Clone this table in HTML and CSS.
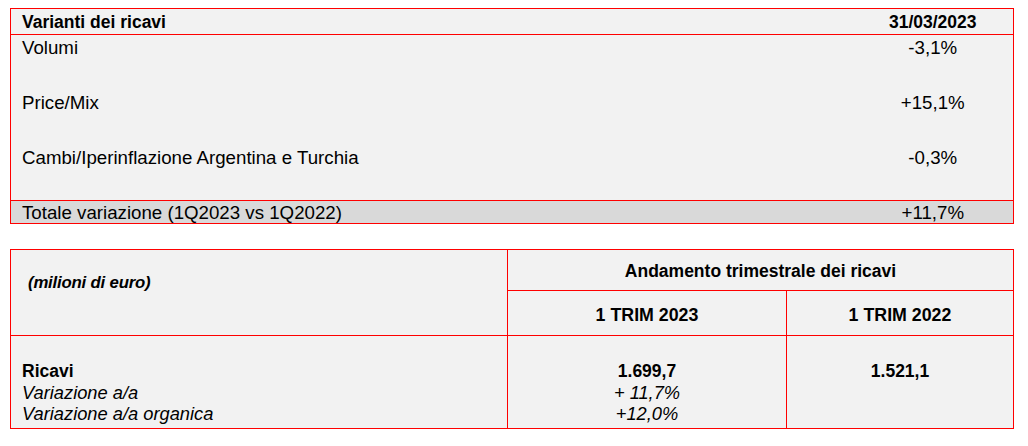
FILE: index.html
```html
<!DOCTYPE html>
<html lang="it">
<head>
<meta charset="utf-8">
<title>Varianti dei ricavi</title>
<link rel="stylesheet" href="styles.css">
</head>
<body>
<main class="page">
  <table class="tbl variants">
    <colgroup><col class="v-label"><col class="v-value"></colgroup>
    <thead>
      <tr class="v-head">
        <th class="lbl">Varianti dei ricavi</th>
        <th class="val">31/03/2023</th>
      </tr>
    </thead>
    <tbody>
      <tr class="v-row"><td class="lbl">Volumi</td><td class="val">-3,1%</td></tr>
      <tr class="v-row"><td class="lbl">Price/Mix</td><td class="val">+15,1%</td></tr>
      <tr class="v-row"><td class="lbl">Cambi/Iperinflazione Argentina e Turchia</td><td class="val">-0,3%</td></tr>
      <tr class="v-total"><td class="lbl">Totale variazione (1Q2023 vs 1Q2022)</td><td class="val">+11,7%</td></tr>
    </tbody>
  </table>

  <table class="tbl quarter">
    <colgroup><col class="q-c1"><col class="q-c2"><col class="q-c3"></colgroup>
    <thead>
      <tr class="q-h1">
        <th rowspan="2" class="unit">(milioni di euro)</th>
        <th colspan="2" class="q-title">Andamento trimestrale dei ricavi</th>
      </tr>
      <tr class="q-h2">
        <th class="q-period">1 TRIM 2023</th>
        <th class="q-period">1 TRIM 2022</th>
      </tr>
    </thead>
    <tbody>
      <tr class="q-body">
        <td class="q-labels">
          <div class="strong">Ricavi</div>
          <div class="em">Variazione a/a</div>
          <div class="em">Variazione a/a organica</div>
        </td>
        <td class="q-num">
          <div class="strong">1.699,7</div>
          <div class="em">+ 11,7%</div>
          <div class="em">+12,0%</div>
        </td>
        <td class="q-num">
          <div class="strong">1.521,1</div>
        </td>
      </tr>
    </tbody>
  </table>
</main>
</body>
</html>
```

FILE: styles.css
```css
html, body {
  margin: 0;
  padding: 0;
  background: #ffffff;
}

body {
  font-family: "Liberation Sans", Arial, Helvetica, sans-serif;
  font-size: 18.7px;
  line-height: 21px;
  color: #000000;
}

.page {
  padding: 8px 0 0 10px;
  width: 1003px;
  display: flex;
  flex-direction: column;
  gap: 25px;
}

.tbl {
  border-collapse: collapse;
  table-layout: fixed;
  width: 1003px;
  background: #f2f2f2;
  border: 1px solid #ff0000;
}

.tbl th, .tbl td {
  padding: 0;
  font-weight: normal;
  text-align: left;
  vertical-align: top;
}

/* ----- Table 1 ----- */
.v-label { width: 842px; }
.v-value { width: 161px; }

.variants .val { text-align: center; }
.variants .lbl { padding-left: 11px; }

.variants .v-head th {
  font-weight: bold;
  font-size: 17.5px;
  height: 22px;
  padding-top: 3px;
  border-bottom: 1px solid #ff0000;
}

.variants .v-row td {
  height: 53px;
  padding-top: 2px;
}

.variants .v-total td {
  background: #d9d9d9;
  border-top: 1px solid #ff0000;
  height: 21px;
  padding-top: 1px;
}

/* ----- Table 2 ----- */
.q-c1 { width: 497px; }
.q-c2 { width: 279px; }
.q-c3 { width: 227px; }

.quarter th, .quarter td {
  border: 1px solid #ff0000;
}

.quarter .unit {
  font-weight: bold;
  font-style: italic;
  font-size: 16.8px;
  letter-spacing: -0.2px;
  padding: 22px 0 0 17px;
}

.quarter .q-title {
  font-weight: bold;
  font-size: 17.5px;
  text-align: center;
  vertical-align: middle;
  height: 41px;
  padding-top: 2px;
  box-sizing: border-box;
}

.quarter .q-period {
  font-weight: bold;
  font-size: 17.8px;
  text-align: center;
  vertical-align: middle;
  height: 45px;
  padding-top: 4px;
  box-sizing: border-box;
}

.quarter .q-body td {
  height: 93px;
  padding-top: 25px;
  box-sizing: border-box;
}

.quarter .q-labels { padding-left: 11px; }

.quarter .q-num { text-align: center; }

.strong { font-weight: bold; font-size: 17.5px; }
.em { font-style: italic; font-size: 18.3px; }
```
